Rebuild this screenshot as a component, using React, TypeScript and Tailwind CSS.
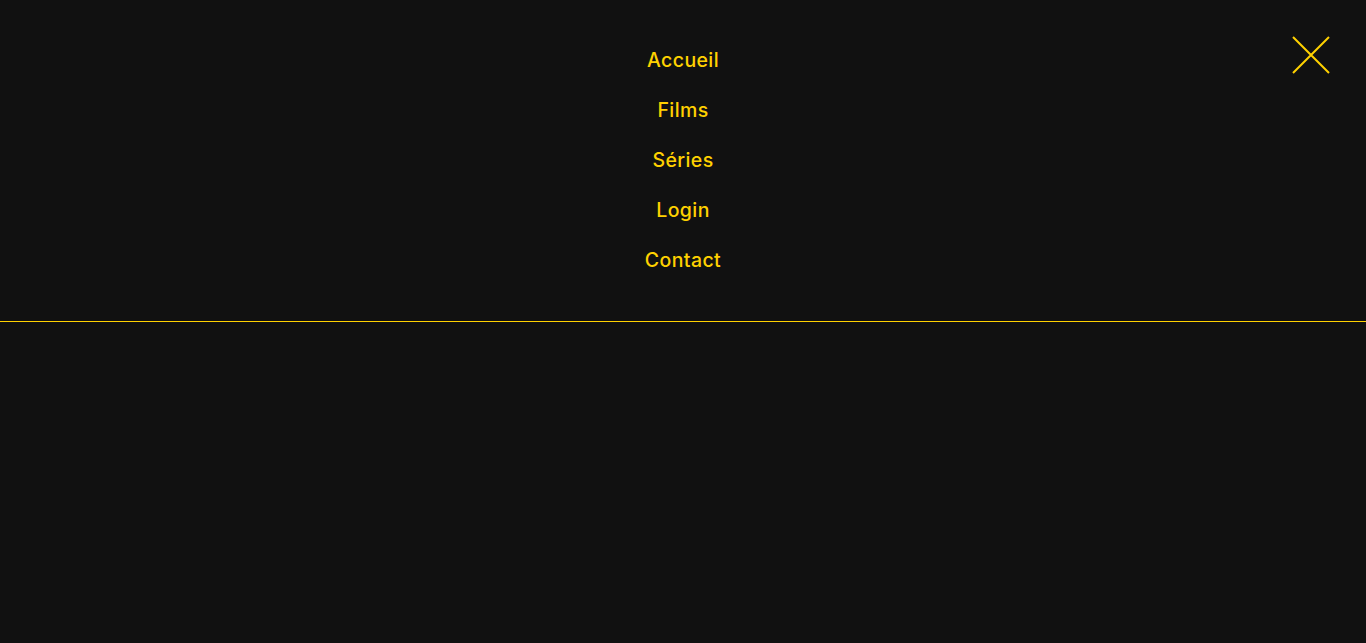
import React from 'react';

const links = ['Accueil', 'Films', 'Séries', 'Login', 'Contact'];

const App: React.FC = () => {
  return (
    <div className="min-h-screen bg-[#111111]" style={{ fontFamily: 'Inter, "Noto Sans", sans-serif' }}>
      <nav className="relative h-[322px] border-b border-[#ffd100]">
        <ul className="flex flex-col items-center gap-[23px] pt-[47px]">
          {links.map(link => (
            <li key={link}>
              <a href="#" className="text-[19.5px] leading-[27px] font-medium tracking-[0.4px] text-[#ffd100]">
                {link}
              </a>
            </li>
          ))}
        </ul>
        <button className="absolute right-[36px] top-[36px] h-[38px] w-[38px]" aria-label="Fermer">
          <svg viewBox="0 0 38 38" className="h-full w-full" fill="none" stroke="#ffd100" strokeWidth="2">
            <path d="M1 1 L37 37 M37 1 L1 37" />
          </svg>
        </button>
      </nav>
    </div>
  );
};

export default App;
